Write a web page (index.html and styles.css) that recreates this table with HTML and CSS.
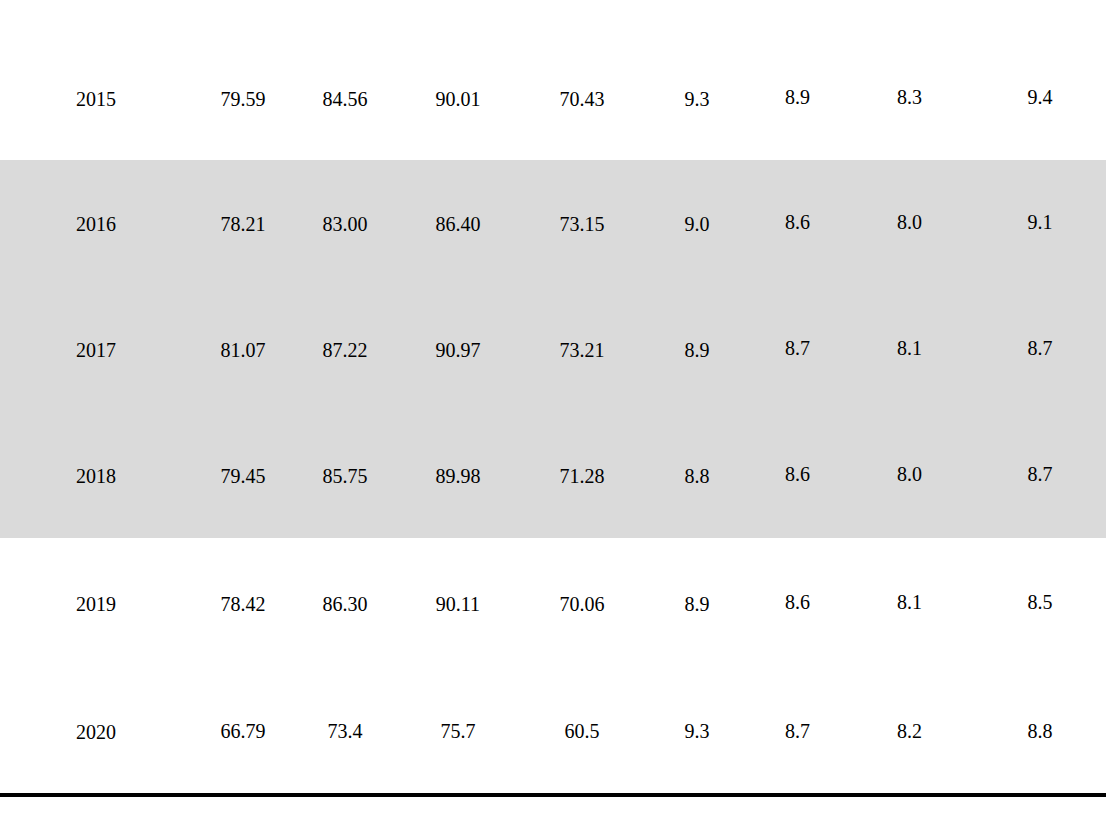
FILE: index.html
```html
<!DOCTYPE html>
<html lang="en">
<head>
<meta charset="utf-8">
<title>Table</title>
<link rel="stylesheet" href="styles.css">
</head>
<body>
<div class="table">
  <div class="row first">
    <div class="cell">2015</div><div class="cell">79.59</div><div class="cell">84.56</div><div class="cell">90.01</div><div class="cell">70.43</div><div class="cell">9.3</div><div class="cell up">8.9</div><div class="cell up">8.3</div><div class="cell up">9.4</div>
  </div>
  <div class="row shaded">
    <div class="cell">2016</div><div class="cell">78.21</div><div class="cell">83.00</div><div class="cell">86.40</div><div class="cell">73.15</div><div class="cell">9.0</div><div class="cell up">8.6</div><div class="cell up">8.0</div><div class="cell up">9.1</div>
  </div>
  <div class="row shaded">
    <div class="cell">2017</div><div class="cell">81.07</div><div class="cell">87.22</div><div class="cell">90.97</div><div class="cell">73.21</div><div class="cell">8.9</div><div class="cell up">8.7</div><div class="cell up">8.1</div><div class="cell up">8.7</div>
  </div>
  <div class="row shaded">
    <div class="cell">2018</div><div class="cell">79.45</div><div class="cell">85.75</div><div class="cell">89.98</div><div class="cell">71.28</div><div class="cell">8.8</div><div class="cell up">8.6</div><div class="cell up">8.0</div><div class="cell up">8.7</div>
  </div>
  <div class="row low">
    <div class="cell">2019</div><div class="cell">78.42</div><div class="cell">86.30</div><div class="cell">90.11</div><div class="cell">70.06</div><div class="cell">8.9</div><div class="cell up">8.6</div><div class="cell up">8.1</div><div class="cell up">8.5</div>
  </div>
  <div class="row low last">
    <div class="cell">2020</div><div class="cell up1">66.79</div><div class="cell up1">73.4</div><div class="cell up1">75.7</div><div class="cell up1">60.5</div><div class="cell up1">9.3</div><div class="cell up1">8.7</div><div class="cell up1">8.2</div><div class="cell up1">8.8</div>
  </div>
</div>
</body>
</html>
```

FILE: styles.css
```css
html, body {
  margin: 0;
  padding: 0;
  background: #ffffff;
}

body {
  font-family: "Liberation Serif", "Times New Roman", serif;
  font-size: 20px;
  color: #000000;
}

.table {
  width: 1106px;
  padding-top: 34px;
}

.row {
  display: grid;
  grid-template-columns: 192px 102px 102px 124px 124px 106px 95px 129px 132px;
  height: 126px;
}

.row.shaded {
  background: #dadada;
}

.row.shaded + .row:not(.shaded) {
  margin-top: -1px;
}

.row.last {
  height: 129px;
  border-bottom: 4px solid #000000;
}

.row:not(.shaded):not(.last) + .row.last {
  margin-top: 1px;
}

.cell {
  display: flex;
  align-items: center;
  justify-content: center;
  line-height: 23px;
  padding-top: 2px;
}

.cell.up {
  padding-top: 0;
  padding-bottom: 2px;
}

.cell.up1 {
  padding-top: 0;
}

.row.first .cell {
  padding-top: 4px;
}

.row.first .cell.up {
  padding-top: 2px;
}

.row.low .cell {
  padding-top: 8px;
}

.row.low .cell.up {
  padding-top: 4px;
  padding-bottom: 0;
}

.row.low .cell.up1 {
  padding-top: 6px;
}
```
